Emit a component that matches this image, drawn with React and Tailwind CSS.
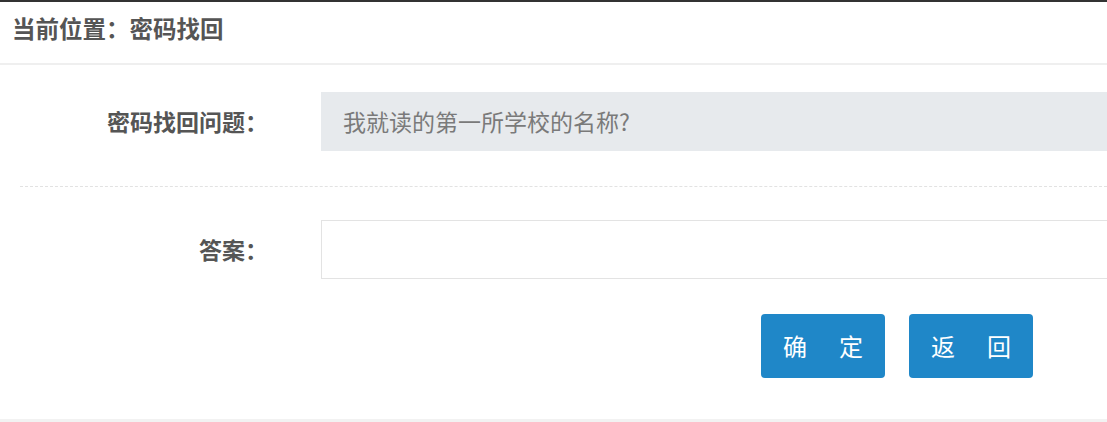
const fontStack = "font-['Noto_Sans_CJK_SC','Noto_Sans',sans-serif]";

const Label = ({ children }) => (
  <div className="w-[301px] shrink-0 pr-[53px] text-right text-[23px] font-bold text-[#555]">
    {children}
  </div>
);

const Button = ({ chars }) => (
  <button className="flex h-[64px] w-[124px] items-center justify-center gap-[32px] rounded-[4px] bg-[#1f87c8] text-[24px] text-white">
    {chars.map((c) => (
      <span key={c}>{c}</span>
    ))}
  </button>
);

export default function App() {
  return (
    <div className={`h-[422px] w-[1107px] overflow-hidden border-t-2 border-[#333] bg-white ${fontStack}`}>
      {/* breadcrumb */}
      <div className="flex h-[63px] items-center border-b-2 border-[#efefef] pb-[8px] pl-[12px] text-[23.5px] font-bold text-[#555]">
        当前位置：密码找回
      </div>

      <div className="border-b-[3px] border-[#f2f2f2] pt-[27px] pb-[41px]">
        {/* question */}
        <div className="ml-[20px] flex items-center border-b border-dashed border-[#e2e2e2] pb-[35px]">
          <Label>密码找回问题：</Label>
          <div className="flex h-[59px] flex-1 items-center bg-[#e7eaed] pl-[22px] text-[23px] text-[#7a7a7a]">
            我就读的第一所学校的名称?
          </div>
        </div>

        {/* answer */}
        <div className="ml-[20px] flex items-center pt-[33px]">
          <Label>答案：</Label>
          <input
            type="text"
            className="h-[59px] flex-1 border border-r-0 border-[#e3e3e3] px-[22px] text-[23px] text-[#555] outline-none"
          />
        </div>

        {/* actions */}
        <div className="ml-[20px] mt-[35px] flex">
          <div className="w-[301px] shrink-0" />
          <div className="ml-[440px] flex gap-[24px]">
            <Button chars={["确", "定"]} />
            <Button chars={["返", "回"]} />
          </div>
        </div>
      </div>
    </div>
  );
}
